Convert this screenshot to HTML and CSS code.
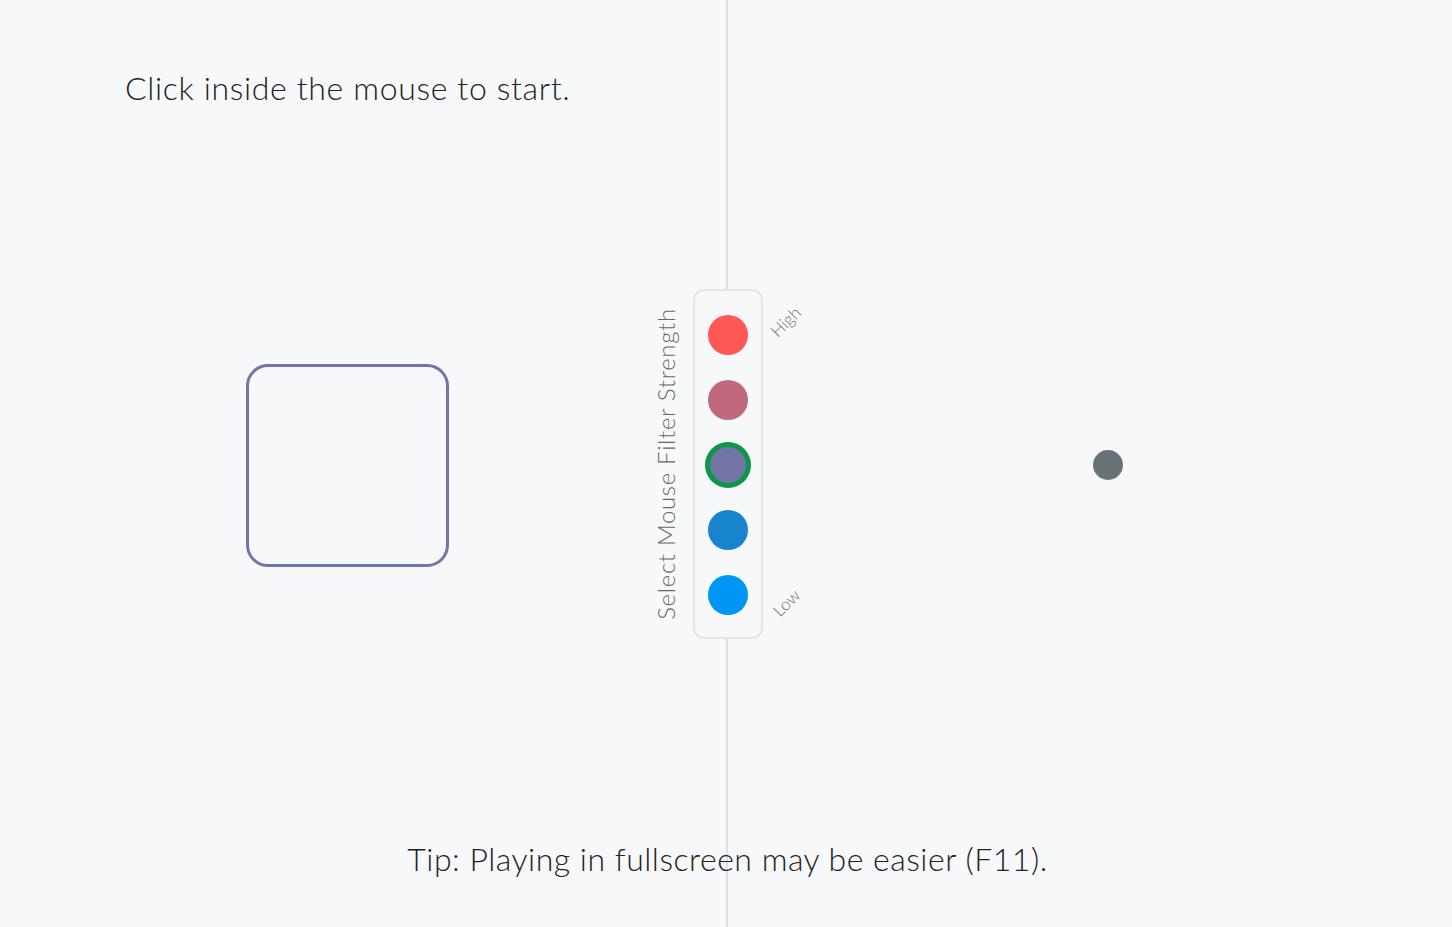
FILE: index.html
```html
<!DOCTYPE html>
<html lang="en">
<head>
<meta charset="utf-8">
<title>Mouse Filter</title>
<link rel="stylesheet" href="styles.css">
</head>
<body>
<div class="page">
  <header class="top">
    <p class="intro">Click inside the mouse to start.</p>
  </header>
  <main class="stage">
    <section class="zone zone-left">
      <div class="mouse-box"></div>
    </section>
    <section class="selector">
      <span class="selector-label">Select Mouse Filter Strength</span>
      <span class="tick tick-high">High</span>
      <span class="tick tick-low">Low</span>
      <div class="swatches">
        <button class="swatch swatch-1" aria-label="Filter 5"></button>
        <button class="swatch swatch-2" aria-label="Filter 4"></button>
        <button class="swatch swatch-3 is-active" aria-label="Filter 3"></button>
        <button class="swatch swatch-4" aria-label="Filter 2"></button>
        <button class="swatch swatch-5" aria-label="Filter 1"></button>
      </div>
    </section>
    <section class="zone zone-right">
      <div class="target"></div>
    </section>
  </main>
  <footer class="bottom">
    <p class="tip">Tip: Playing in fullscreen may be easier (F11).</p>
  </footer>
</div>
</body>
</html>
```

FILE: styles.css
```css
html, body {
  margin: 0;
  padding: 0;
  height: 100%;
}

body {
  background: #f7f8fa;
  font-family: Lato, "Open Sans", sans-serif;
  font-weight: 300;
  color: #222;
  overflow: hidden;
}

.page {
  position: relative;
  height: 927px;
  display: grid;
  grid-template-rows: 180px 1fr 180px;
}

.page::before {
  content: "";
  position: absolute;
  top: 0;
  bottom: 0;
  left: 726px;
  width: 2px;
  background: #dedfe0;
  z-index: 0;
}

.top {
  padding: 68px 0 0 125px;
  position: relative;
  z-index: 1;
}

.intro {
  margin: 0;
  font-size: 32px;
  line-height: 40px;
  letter-spacing: 0.65px;
  color: #222;
}

.stage {
  display: grid;
  grid-template-columns: 693px 70px 1fr;
  align-items: center;
}

.zone {
  display: flex;
  align-items: center;
  justify-content: center;
  height: 100%;
}

.mouse-box {
  width: 197px;
  height: 197px;
  border: 3px solid #7275a8;
  border-radius: 22px;
  margin: 3px 0 0 1px;
}

.target {
  width: 30px;
  height: 30px;
  border-radius: 50%;
  background: #687377;
  margin-top: 2px;
}

.selector {
  position: relative;
  z-index: 1;
}

.swatches {
  box-sizing: border-box;
  width: 70px;
  height: 350px;
  border: 2px solid #e4e5e6;
  border-radius: 11px;
  background: #f7f8fa;
  display: flex;
  flex-direction: column;
  align-items: center;
  padding-top: 24px;
  gap: 25px;
}

.swatch {
  width: 40px;
  height: 40px;
  border-radius: 50%;
  border: none;
  padding: 0;
  flex: none;
}

.swatch-1 { background: #ff5656; }
.swatch-2 { background: #c0687e; }
.swatch-3 { background: #7275a6; }
.swatch-4 { background: #1784cb; }
.swatch-5 { background: #0096f5; }

.swatch.is-active {
  box-shadow: 0 0 0 5px #0a9844;
  width: 36px;
  height: 36px;
  margin: 2px 0;
}

.selector-label {
  position: absolute;
  left: -42px;
  top: 50%;
  transform: translateY(-50%) rotate(180deg);
  writing-mode: vertical-rl;
  font-size: 24px;
  letter-spacing: 0.65px;
  color: #5f6a6d;
  white-space: nowrap;
}

.tick {
  position: absolute;
  font-size: 17px;
  color: #6b7477;
  transform: rotate(-45deg);
  transform-origin: center;
}

.tick-high {
  left: 75px;
  top: 22px;
}

.tick-low {
  left: 78px;
  top: 303px;
}

.bottom {
  display: flex;
  justify-content: center;
  align-items: flex-start;
  padding-top: 92px;
  position: relative;
  z-index: 0;
}

.tip {
  margin: 0;
  font-size: 32px;
  line-height: 40px;
  color: #222;
  letter-spacing: 0.5px;
  margin-left: 3px;
}
```
